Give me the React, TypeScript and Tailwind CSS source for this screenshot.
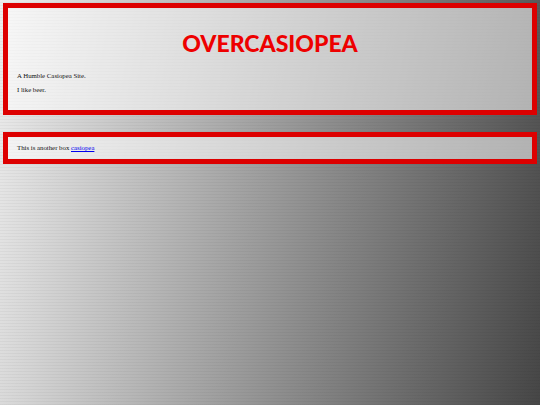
export default function App() {
  return (
    <div className="min-h-screen bg-[repeating-linear-gradient(0deg,rgba(0,0,0,0.035)_0px,rgba(0,0,0,0.035)_1px,transparent_1px,transparent_3px),linear-gradient(100deg,#eeeeee_0%,#464646_100%)] pt-[3px] px-[3px] font-['Liberation_Serif',serif] text-[#111]">
      <section className="border-[5px] border-[#dd0000] bg-white/55 px-[9px] pt-[23px] pb-[13px]">
        <h1 className="text-center font-['Lato',sans-serif] text-[23px] leading-[24px] font-black text-[#ee0000]">
          OVERCASIOPEA
        </h1>
        <p className="mt-[14px] text-[6.8px] leading-[14px]">A Humble Casiopea Site.</p>
        <p className="text-[6.8px] leading-[14px]">I like beer.</p>
      </section>
      <section className="mt-[17px] border-[5px] border-[#dd0000] bg-white/55 px-[9px] py-[4px]">
        <p className="text-[6.8px] leading-[14px]">
          This is another box{' '}
          <a href="#" className="text-[#0000ee] underline">
            casiopea
          </a>
        </p>
      </section>
    </div>
  );
}
